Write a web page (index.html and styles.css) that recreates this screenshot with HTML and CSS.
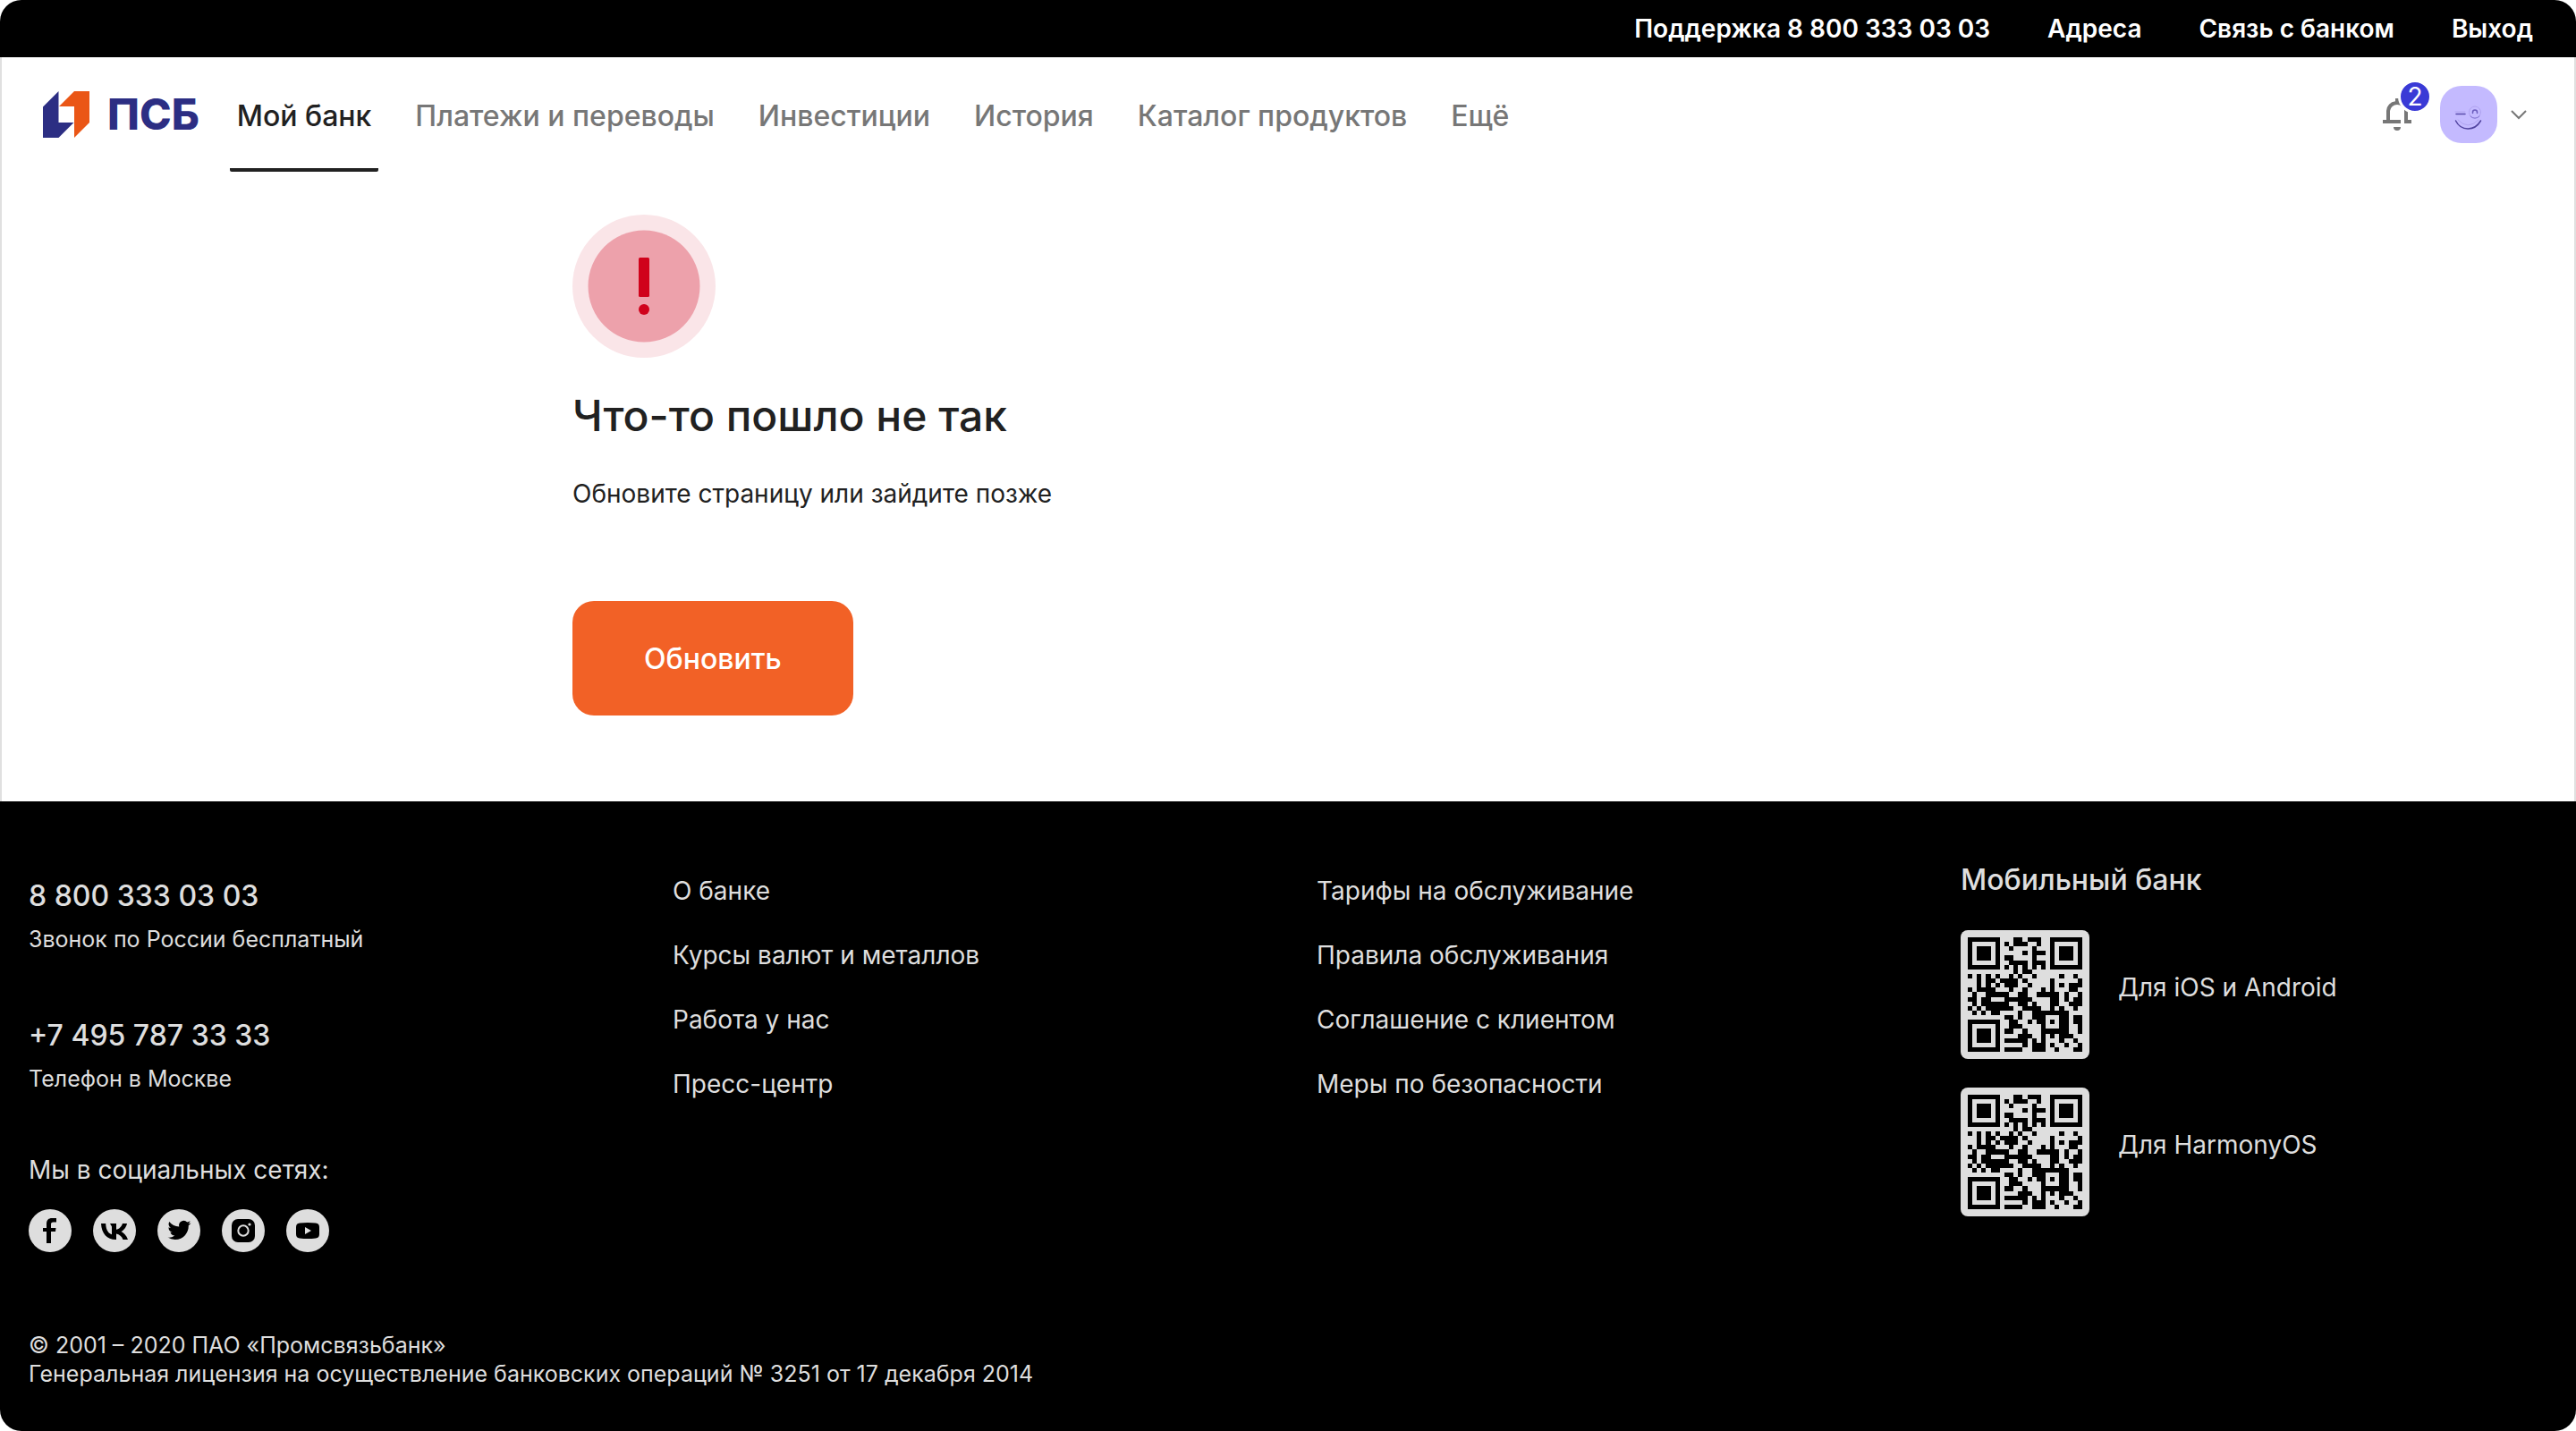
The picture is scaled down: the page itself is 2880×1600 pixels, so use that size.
FILE: index.html
```html
<!DOCTYPE html>
<html lang="ru">
<head>
<meta charset="utf-8">
<meta name="viewport" content="width=device-width, initial-scale=1">
<title>ПСБ — Мой банк</title>
<link rel="stylesheet" href="styles.css">
</head>
<body>
<div class="page">
  <nav class="topbar" aria-label="Служебное меню">
    <a href="#">Поддержка 8 800 333 03 03</a>
    <a href="#">Адреса</a>
    <a href="#">Связь с банком</a>
    <a href="#">Выход</a>
  </nav>

  <div class="body">
    <header class="header">
      <a class="logo" href="#">
        <svg class="logo-mark" viewBox="0 0 52 52" aria-hidden="true">
          <path fill="#2c2e83" d="M17.500 0v35H34.500L17.500 52H0V17.500z"/>
          <path fill="#ea5616" d="M52 0v35L35 52V17H18L35 0z"/>
        </svg>
        <span class="logo-name">ПСБ</span>
      </a>
      <nav class="menu" aria-label="Главное меню">
        <a class="menu-item menu-item-active" href="#">Мой банк</a>
        <a class="menu-item" href="#">Платежи и переводы</a>
        <a class="menu-item" href="#">Инвестиции</a>
        <a class="menu-item" href="#">История</a>
        <a class="menu-item" href="#">Каталог продуктов</a>
        <a class="menu-item" href="#">Ещё</a>
      </nav>
      <div class="user">
        <button class="bell" type="button" aria-label="Уведомления">
          <svg viewBox="0 0 32 36" aria-hidden="true">
            <path fill="#777" d="M14 0h4v3.300A11 11 0 0 1 28 14v10h4v4H0v-4h4V14A11 11 0 0 1 14 3.300zM16 7a8 8 0 0 0-8 7v10h16V14a8 8 0 0 0-8-7zM12 32h8a4 4 0 0 1-8 0z"/>
            <path fill="#fff" d="M20 10h4v18h-4z"/>
            <path fill="#777" d="M24 14h4v10h4v4h-8z"/>
          </svg>
          <span class="badge">2</span>
        </button>
        <button class="profile" type="button" aria-label="Профиль">
          <svg class="avatar" viewBox="0 0 64 64" aria-hidden="true">
            <rect width="64" height="64" rx="24" fill="#c4baff"/>
            <g fill="none" stroke-linecap="round">
              <path stroke="#b0a4ef" d="M17 29h11"/>
              <path stroke="#5a4cab" stroke-width="1.500" d="M18 31.500h10"/>
              <circle cx="39" cy="29.500" r="6.500" stroke="#afa2f0"/>
              <path stroke="#8577d2" d="M34 34a6.500 6.500 0 0 0 10 0"/>
              <path stroke="#6b5dbd" stroke-width="1.500" d="M36.500 30.500v-1a2.500 2.500 0 0 1 5 0v1"/>
              <path stroke="#b0a4ef" d="M20 38q11 12 23 0"/>
              <path stroke="#51439f" stroke-width="1.500" d="M17.500 39c6 12 21 12 28 0"/>
            </g>
          </svg>
          <svg class="chevron" viewBox="0 0 18 12" aria-hidden="true">
            <path fill="none" stroke="#777" stroke-width="2" d="M1 2l8 8 8-8"/>
          </svg>
        </button>
      </div>
    </header>

    <main class="error">
      <svg class="error-icon" viewBox="0 0 160 160" aria-hidden="true">
        <circle cx="80" cy="80" r="80" fill="#fae5e8"/>
        <circle cx="80" cy="80" r="62.500" fill="#eda1ab"/>
        <rect x="74" y="48" width="12" height="44" rx="1.500" fill="#d0021b"/>
        <circle cx="80" cy="106" r="6" fill="#d0021b"/>
      </svg>
      <h1 class="error-title">Что-то пошло не так</h1>
      <p class="error-text">Обновите страницу или зайдите позже</p>
      <button class="error-button" type="button">Обновить</button>
    </main>
  </div>

  <footer class="footer">
    <div class="columns">
      <section class="contacts">
        <div class="phone">
          <a class="phone-number" href="tel:88003330303">8 800 333 03 03</a>
          <span class="caption">Звонок по России бесплатный</span>
        </div>
        <div class="phone">
          <a class="phone-number" href="tel:+74957873333">+7 495 787 33 33</a>
          <span class="caption">Телефон в Москве</span>
        </div>
        <div class="social">
          <span>Мы в социальных сетях:</span>
          <div class="social-links">
            <a href="#" aria-label="Facebook"><svg viewBox="0 0 48 48"><circle cx="24" cy="24" r="24" fill="#dedede"/><path d="M20 38V25h-4v-4h4v-4.500c0-4.500 2.500-6.500 6-6.500h5v4.500h-3.500c-2 0-2.500 1-2.500 2.500v4h5.500l-.5 4h-5v13z"/></svg></a>
            <a href="#" aria-label="ВКонтакте"><svg viewBox="0 0 48 48"><circle cx="24" cy="24" r="24" fill="#dedede"/><path d="M25.500 34C15.500 34 9.500 27 9 16h5.200c.2 8 3.800 11.500 6.800 12.200V19.500L19 16h7v6.800c3-.3 6-3.500 7-6.800h5c-.8 4.500-4 7.700-6.500 9 2.500 1.200 6 4.200 7.500 9h-5.500c-1.200-3.500-4-6-7.500-6.500V34z"/></svg></a>
            <a href="#" aria-label="Twitter"><svg viewBox="0 0 48 48"><circle cx="24" cy="24" r="24" fill="#dedede"/><path transform="translate(11.500 10.500) scale(1.080)" d="M23.950 4.570a10 10 0 0 1-2.820.77 4.960 4.960 0 0 0 2.160-2.720c-.95.550-2 .95-3.130 1.180a4.920 4.920 0 0 0-8.380 4.480C7.690 8.090 4.070 6.130 1.640 3.160a4.930 4.930 0 0 0 1.520 6.570 4.900 4.900 0 0 1-2.230-.61v.06a4.920 4.920 0 0 0 3.950 4.830 5 5 0 0 1-2.210.08 4.940 4.940 0 0 0 4.600 3.420A9.870 9.870 0 0 1 0 19.540a13.990 13.990 0 0 0 7.550 2.210c9.050 0 14-7.500 14-13.980 0-.21 0-.42-.02-.63a9.940 9.940 0 0 0 2.460-2.550z"/></svg></a>
            <a href="#" aria-label="Instagram"><svg viewBox="0 0 48 48"><circle cx="24" cy="24" r="24" fill="#dedede"/><rect x="11" y="11" width="26" height="26" rx="7"/><circle cx="24" cy="24" r="5.700" fill="none" stroke="#dedede" stroke-width="2"/><circle cx="31" cy="17" r="1.600" fill="#dedede"/></svg></a>
            <a href="#" aria-label="YouTube"><svg viewBox="0 0 48 48"><circle cx="24" cy="24" r="24" fill="#dedede"/><path d="M15 15.500q9-1 18 0q4 .3 4 4.500v8q0 4.200-4 4.500q-9 1-18 0q-4-.3-4-4.500v-8q0-4.200 4-4.500z"/><path fill="#dedede" d="M21 20l7 4-7 4z"/></svg></a>
          </div>
        </div>
      </section>

      <nav class="links" aria-label="О банке">
        <a href="#">О банке</a>
        <a href="#">Курсы валют и металлов</a>
        <a href="#">Работа у нас</a>
        <a href="#">Пресс-центр</a>
      </nav>

      <nav class="links" aria-label="Документы">
        <a href="#">Тарифы на обслуживание</a>
        <a href="#">Правила обслуживания</a>
        <a href="#">Соглашение с клиентом</a>
        <a href="#">Меры по безопасности</a>
      </nav>

      <section class="mobile">
        <h2 class="mobile-title">Мобильный банк</h2>
        <div class="app">
          <svg class="qr" viewBox="0 0 144 144" role="img" aria-label="QR-код"></svg>
          <span class="app-name">Для iOS и Android</span>
        </div>
        <div class="app">
          <svg class="qr" viewBox="0 0 144 144" role="img" aria-label="QR-код"></svg>
          <span class="app-name">Для HarmonyOS</span>
        </div>
      </section>
    </div>

    <p class="legal">© 2001 – 2020 ПАО «Промсвязьбанк»<br>Генеральная лицензия на осуществление банковских операций № 3251 от 17 декабря 2014</p>
  </footer>
</div>
<script src="qr.js"></script>
</body>
</html>
```
FILE: styles.css
```css
* { box-sizing: border-box; }

body {
  margin: 0;
  background: #fff;
  color: #212121;
  font-family: Inter, "Liberation Sans", sans-serif;
  font-size: 28px;
  line-height: 40px;
}

a { color: inherit; text-decoration: none; }

button {
  border: 0;
  padding: 0;
  background: none;
  color: inherit;
  font: inherit;
  cursor: pointer;
}

svg { display: block; }

.page {
  display: flex;
  flex-direction: column;
  min-height: 100vh;
  border-radius: 24px;
  overflow: hidden;
}

.topbar {
  display: flex;
  justify-content: flex-end;
  align-items: center;
  gap: 64px;
  height: 64px;
  padding: 0 48px;
  background: #000;
  color: #fff;
  font-weight: 600;
}

.body {
  flex: 1;
  border: solid #e0e0e0;
  border-width: 0 2px;
}

.header {
  display: flex;
  align-items: center;
  height: 128px;
  padding: 0 46px;
}

.logo { display: flex; align-items: center; gap: 20px; }
.logo-mark { width: 52px; height: 52px; }
.logo-name {
  color: #2c2e83;
  font-size: 48px;
  line-height: 52px;
  font-weight: 800;
}

.menu { display: flex; gap: 33px; margin-left: 34px; font-size: 32px; }
.menu-item {
  padding: 46px 8px 38px;
  border-bottom: 4px solid transparent;
  color: #777;
  font-weight: 500;
}
.menu-item-active { border-color: #212121; border-radius: 2px; color: #212121; }

.user { display: flex; align-items: center; gap: 32px; margin-left: auto; }
.bell { position: relative; width: 32px; height: 36px; }
.bell svg { width: 32px; height: 36px; }
.badge {
  position: absolute;
  top: -21px;
  left: 17px;
  width: 38px;
  height: 38px;
  border: 3px solid #fff;
  border-radius: 50%;
  background: #3a3ad6;
  color: #fff;
  font-size: 28px;
  line-height: 32px;
}
.profile { display: flex; align-items: center; gap: 15px; padding-right: 7px; }
.avatar { width: 64px; height: 64px; }
.chevron { width: 18px; height: 12px; }

.error {
  display: flex;
  flex-direction: column;
  align-items: flex-start;
  max-width: 1600px;
  margin: 0 auto;
  padding: 48px 0 96px;
}
.error-icon { width: 160px; height: 160px; }
.error-title { margin: 33px 0 35px; font-size: 48px; line-height: 64px; font-weight: 500; }
.error-text { margin: 0 0 100px; }
.error-button {
  padding: 45px 80px 43px;
  border-radius: 24px;
  background: #f26126;
  color: #fff;
  font-size: 32px;
  font-weight: 500;
}

.footer { background: #000; color: #dedede; padding-bottom: 48px; }
.columns { display: grid; grid-template-columns: repeat(4, 1fr); }
.columns > * { padding: 80px 32px 0; }

.contacts { display: flex; flex-direction: column; gap: 66px; }
.phone { display: flex; flex-direction: column; gap: 8px; padding-top: 2px; }
.phone-number { font-size: 32px; line-height: 48px; font-weight: 500; }
.caption { font-size: 25px; line-height: 32px; }
.social { display: flex; flex-direction: column; gap: 24px; }
.social-links { display: flex; gap: 24px; }
.social-links svg { width: 48px; height: 48px; }

.links { display: flex; flex-direction: column; align-items: flex-start; gap: 32px; }

.columns > .mobile { display: flex; flex-direction: column; gap: 32px; padding-top: 64px; }
.mobile-title { margin: 0; font-size: 32px; line-height: 48px; font-weight: 500; }
.app { display: flex; align-items: center; gap: 32px; }
.app-name { padding-bottom: 16px; }
.qr { width: 144px; height: 144px; border-radius: 8px; background: #dedede; }

.legal { margin: 88px 32px 0; font-size: 25px; line-height: 32px; }
```
FILE: qr.js
```js
// Module map of the app-store QR code, one string per row.
const rows = [
  '#######...##.###..#######',
  '#.....#.#.###..#..#.....#',
  '#.###.#..#....#...#.###.#',
  '#.###.#.....#.###.#.###.#',
  '#.###.#.##....#...#.###.#',
  '#.....#..####.###.#.....#',
  '#######.#.#.#.#.#.#######',
  '..........#.##...........',
  '#.#.#.#..#.#..#.....#..#.',
  '..#.##.####.#.....#.....#',
  '..#.#.#.###..#....#.#.###',
  '#.####...#..#...#.#...##.',
  '.#..#####..##..#####.#..#',
  '##.##...######....##.#.##',
  '.#.######..##.#...##..###',
  '#.#.######..####..#.#..#.',
  '.#.#.##....#..########...',
  '........##.#..###...##.##',
  '#######..##..#.##.#.##.##',
  '#.....#..###....#...##..#',
  '#.###.#.##..#...######..#',
  '#.###.#....###..#.#.###..',
  '#.###.#.#####.#.#...#..#.',
  '#.....#.....#.###.#..#..#',
  '#######.####..###..#...##'
];
const unit = 128 / 25;
let path = '';
rows.forEach((row, y) => {
  for (const run of row.matchAll(/#+/g)) {
    const w = run[0].length * unit;
    path += `M${8 + run.index * unit} ${8 + y * unit}h${w}v${unit}h${-w}z`;
  }
});
document.querySelectorAll('.qr').forEach(svg => {
  svg.innerHTML = `<path shape-rendering="crispEdges" d="${path}"/>`;
});
```
